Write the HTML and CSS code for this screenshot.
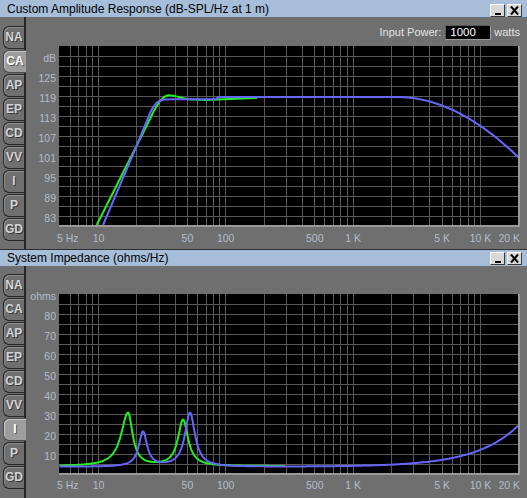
FILE: index.html
```html
<!DOCTYPE html>
<html>
<head>
<meta charset="utf-8">
<title>Response</title>
<link rel="stylesheet" href="styles.css">
</head>
<body>
<div class="window win-top">
  <div class="titlebar">
    <span class="title">Custom Amplitude Response (dB-SPL/Hz at 1 m)</span>
    <div class="wbtns">
      <span class="wbtn"><span class="minbar"></span></span>
      <span class="wbtn"><svg width="13" height="11" viewBox="0 0 13 11"><path d="M3 1.5L10 9.5M10 1.5L3 9.5" stroke="#000" stroke-width="2"/></svg></span>
    </div>
  </div>
  <div class="wbody">
    <div class="tabs">
      <div class="tab">NA</div><div class="tab sel">CA</div><div class="tab">AP</div><div class="tab">EP</div><div class="tab">CD</div><div class="tab">VV</div><div class="tab">I</div><div class="tab">P</div><div class="tab">GD</div>
    </div>
    <div class="content">
      <div class="toprow">
        <span class="lbl">Input Power:</span><span class="inbox">1000</span><span class="lbl">watts</span>
      </div>
      <svg class="chart" width="501" height="203" viewBox="0 0 501 203">
        <g class="axl" text-anchor="end">
          <text x="30" y="15.5">dB</text><text x="30" y="35.5">125</text><text x="30" y="55.5">119</text><text x="30" y="75.5">113</text><text x="30" y="95.5">107</text><text x="30" y="115.5">101</text><text x="30" y="135.5">95</text><text x="30" y="155.5">89</text><text x="30" y="175.5">83</text>
        </g>
        <g transform="translate(33,0)">
          <rect x="0" y="0" width="459" height="179" fill="#000"/>
          <path class="grid" d="M11.5 0V179M19.5 0V179M27.5 0V179M33.5 0V179M39.5 0V179M77.5 0V179M100.5 0V179M116.5 0V179M128.5 0V179M138.5 0V179M147.5 0V179M154.5 0V179M160.5 0V179M166.5 0V179M205.5 0V179M227.5 0V179M243.5 0V179M255.5 0V179M265.5 0V179M274.5 0V179M281.5 0V179M288.5 0V179M294.5 0V179M332.5 0V179M354.5 0V179M370.5 0V179M383.5 0V179M393.5 0V179M401.5 0V179M409.5 0V179M415.5 0V179M421.5 0V179M0 10.5H459M0 20.5H459M0 30.5H459M0 40.5H459M0 50.5H459M0 60.5H459M0 70.5H459M0 80.5H459M0 90.5H459M0 100.5H459M0 110.5H459M0 120.5H459M0 130.5H459M0 140.5H459M0 150.5H459M0 160.5H459M0 170.5H459"/>
          <path class="cg" d="M37.7 179L78 99L91 73C96 62 102 50.5 109 49.3C114 48.8 119 51 129 53.3L147 54L171 53L198 52"/>
          <path class="cb" d="M44 179L78 99L89 72C92 64 96 57 101 54.5C104 53.3 108 53.3 115 53.3L157 53.3L159 51L341 51C381 52 421 74 459 111"/>
          <rect x="459" y="0" width="2" height="181" fill="#9a9a9a"/>
          <rect x="0" y="179" width="461" height="2" fill="#9a9a9a"/>
        </g>
        <g class="axl">
          <text x="31" y="195.5">5 Hz</text>
          <text x="72.5" y="195.5" text-anchor="middle">10</text>
          <text x="161.4" y="195.5" text-anchor="middle">50</text>
          <text x="199.7" y="195.5" text-anchor="middle">100</text>
          <text x="288.8" y="195.5" text-anchor="middle">500</text>
          <text x="327.1" y="195.5" text-anchor="middle">1 K</text>
          <text x="416.2" y="195.5" text-anchor="middle">5 K</text>
          <text x="454.5" y="195.5" text-anchor="middle">10 K</text>
          <text x="494" y="195.5" text-anchor="end">20 K</text>
        </g>
      </svg>
    </div>
  </div>
</div>
<div class="window win-bot">
  <div class="titlebar">
    <span class="title">System Impedance (ohms/Hz)</span>
    <div class="wbtns">
      <span class="wbtn"><span class="minbar"></span></span>
      <span class="wbtn"><svg width="13" height="11" viewBox="0 0 13 11"><path d="M3 1.5L10 9.5M10 1.5L3 9.5" stroke="#000" stroke-width="2"/></svg></span>
    </div>
  </div>
  <div class="wbody">
    <div class="tabs">
      <div class="tab">NA</div><div class="tab">CA</div><div class="tab">AP</div><div class="tab">EP</div><div class="tab">CD</div><div class="tab">VV</div><div class="tab sel">I</div><div class="tab">P</div><div class="tab">GD</div>
    </div>
    <div class="content">
      <div class="toprow"></div>
      <svg class="chart" width="501" height="204" viewBox="0 0 501 204">
        <g class="axl" text-anchor="end">
          <text x="30" y="5.5">ohms</text><text x="30" y="25.5">80</text><text x="30" y="45.5">70</text><text x="30" y="65.5">60</text><text x="30" y="85.5">50</text><text x="30" y="105.5">40</text><text x="30" y="125.5">30</text><text x="30" y="145.5">20</text><text x="30" y="165.5">10</text>
        </g>
        <g transform="translate(33,0)">
          <rect x="0" y="0" width="459" height="179" fill="#000"/>
          <path class="grid" d="M11.5 0V179M19.5 0V179M27.5 0V179M33.5 0V179M39.5 0V179M77.5 0V179M100.5 0V179M116.5 0V179M128.5 0V179M138.5 0V179M147.5 0V179M154.5 0V179M160.5 0V179M166.5 0V179M205.5 0V179M227.5 0V179M243.5 0V179M255.5 0V179M265.5 0V179M274.5 0V179M281.5 0V179M288.5 0V179M294.5 0V179M332.5 0V179M354.5 0V179M370.5 0V179M383.5 0V179M393.5 0V179M401.5 0V179M409.5 0V179M415.5 0V179M421.5 0V179M0 10.5H459M0 20.5H459M0 30.5H459M0 40.5H459M0 50.5H459M0 60.5H459M0 70.5H459M0 80.5H459M0 90.5H459M0 100.5H459M0 110.5H459M0 120.5H459M0 130.5H459M0 140.5H459M0 150.5H459M0 160.5H459M0 170.5H459"/>
          <path id="zg" class="cg" d=""/>
          <path id="zb" class="cb" d=""/>
          <rect x="459" y="0" width="2" height="181" fill="#9a9a9a"/>
          <rect x="0" y="179" width="461" height="2" fill="#9a9a9a"/>
        </g>
        <g class="axl">
          <text x="31" y="195">5 Hz</text>
          <text x="72.5" y="195" text-anchor="middle">10</text>
          <text x="161.4" y="195" text-anchor="middle">50</text>
          <text x="199.7" y="195" text-anchor="middle">100</text>
          <text x="288.8" y="195" text-anchor="middle">500</text>
          <text x="327.1" y="195" text-anchor="middle">1 K</text>
          <text x="416.2" y="195" text-anchor="middle">5 K</text>
          <text x="454.5" y="195" text-anchor="middle">10 K</text>
          <text x="494" y="195" text-anchor="end">20 K</text>
        </g>
      </svg>
    </div>
  </div>
</div>
<script src="script.js"></script>
</body>
</html>
```

FILE: styles.css
```css
* { box-sizing: border-box; }
html, body { margin: 0; padding: 0; }
body {
  width: 527px;
  height: 498px;
  overflow: hidden;
  background: #6f6f6f;
  font-family: "Liberation Sans", Arial, sans-serif;
}
.window {
  display: flex;
  flex-direction: column;
  background: #6f6f6f;
}
.win-top { height: 250px; border-bottom: 1px solid #2e2e2e; }
.win-bot { height: 248px; }

.titlebar {
  display: flex;
  align-items: flex-start;
  background: #a6bed9;
  color: #000;
  font-size: 12px;
  padding-left: 7px;
  padding-right: 5px;
  flex: none;
}
.win-top .titlebar { height: 17px; }
.win-bot .titlebar { height: 16px; }
.title { flex: 1; white-space: nowrap; }
.win-top .title { padding-top: 2px; line-height: 15px; }
.win-bot .title { line-height: 16px; }

.wbtns { display: flex; gap: 2px; }
.win-top .wbtns { margin-top: 4px; }
.win-bot .wbtns { margin-top: 2px; }
.wbtn {
  width: 15px;
  height: 13px;
  background: #d9d9d9;
  border: 1px solid;
  border-color: #ffffff #3a3a3a #3a3a3a #ffffff;
  display: flex;
  align-items: center;
  justify-content: center;
}
.wbtn svg { display: block; }
.minbar {
  width: 6px;
  height: 2px;
  background: #000;
  margin-top: 6px;
}

.wbody { flex: 1; display: flex; min-height: 0; }
.tabs {
  width: 26px;
  border-right: 2px solid #262626;
  display: flex;
  flex-direction: column;
  flex: none;
}
.win-top .tabs { padding-top: 9px; }
.win-bot .tabs { padding-top: 8px; }
.tab {
  margin-left: 3px;
  width: 21px;
  height: 23px;
  margin-bottom: 1px;
  border: 1px solid #262626;
  border-right: none;
  border-radius: 6px 0 0 6px;
  box-shadow: inset 1px 1px 0 #8e8e8e;
  color: #d4d4d4;
  font-weight: bold;
  font-size: 12px;
  line-height: 21px;
  text-align: center;
  text-shadow: 1px 1px 0 #3a3a3a;
  flex: none;
}
.tab.sel {
  width: 23px;
  background: #9d9d9d;
  color: #ffffff;
  border-color: #4a4a4a;
  box-shadow: inset 1px 1px 0 #c8c8c8;
  text-shadow: 1px 1px 0 #555;
}

.content { flex: 1; display: flex; flex-direction: column; min-width: 0; }
.toprow {
  display: flex;
  justify-content: flex-end;
  align-items: flex-start;
  padding-top: 8px;
  padding-right: 7px;
  flex: none;
}
.win-top .toprow { height: 29px; }
.win-bot .toprow { height: 28px; }
.lbl { color: #e4e4e4; font-size: 11px; line-height: 15px; }
.inbox {
  width: 46px;
  height: 15px;
  margin: 0 3px 0 4px;
  background: #000;
  color: #fff;
  border: 1px solid;
  border-color: #5a5a5a #9c9c9c #9c9c9c #5a5a5a;
  font-size: 11.5px;
  line-height: 13px;
  padding-left: 4px;
}

.chart { display: block; overflow: visible; flex: none; }
.axl { fill: #b2bccb; font-family: "Liberation Sans", Arial, sans-serif; font-size: 10.5px; }
.grid { stroke: #585858; stroke-width: 1; fill: none; shape-rendering: crispEdges; }
.cg { stroke: #22f022; stroke-width: 2; fill: none; stroke-linejoin: round; }
.cb { stroke: #6666ff; stroke-width: 2; fill: none; stroke-linejoin: round; }
```

FILE: script.js
```js
(function () {
  function freq(x) { return 5 * Math.pow(10, (x - 1) / 127.4); }
  function res(f, f0, a, ql, qh) {
    var q = f < f0 ? ql : qh;
    var r = f / f0 - f0 / f;
    return a / (1 + q * q * r * r);
  }
  function build(fn, x0, x1) {
    var d = "";
    for (var x = x0; x <= x1; x += 0.5) {
      var y = fn(freq(x));
      d += (d ? "L" : "M") + x.toFixed(1) + " " + y.toFixed(2);
    }
    return d;
  }
  var green = function (f) {
    return 172 - 2 * (res(f, 17.1, 26.5, 3.3, 5) + res(f, 46.2, 23, 4.5, 4.5));
  };
  var blue = function (f) {
    return 172.7 - 2 * (res(f, 22.4, 17.35, 5.5, 5.5) + res(f, 52.4, 26.85, 4.5, 4.5)) - 41.7 * Math.pow(f / 20000, 1.3);
  };
  document.getElementById("zg").setAttribute("d", build(green, 0.5, 226));
  document.getElementById("zb").setAttribute("d", build(blue, 0.5, 459));
})();
```
